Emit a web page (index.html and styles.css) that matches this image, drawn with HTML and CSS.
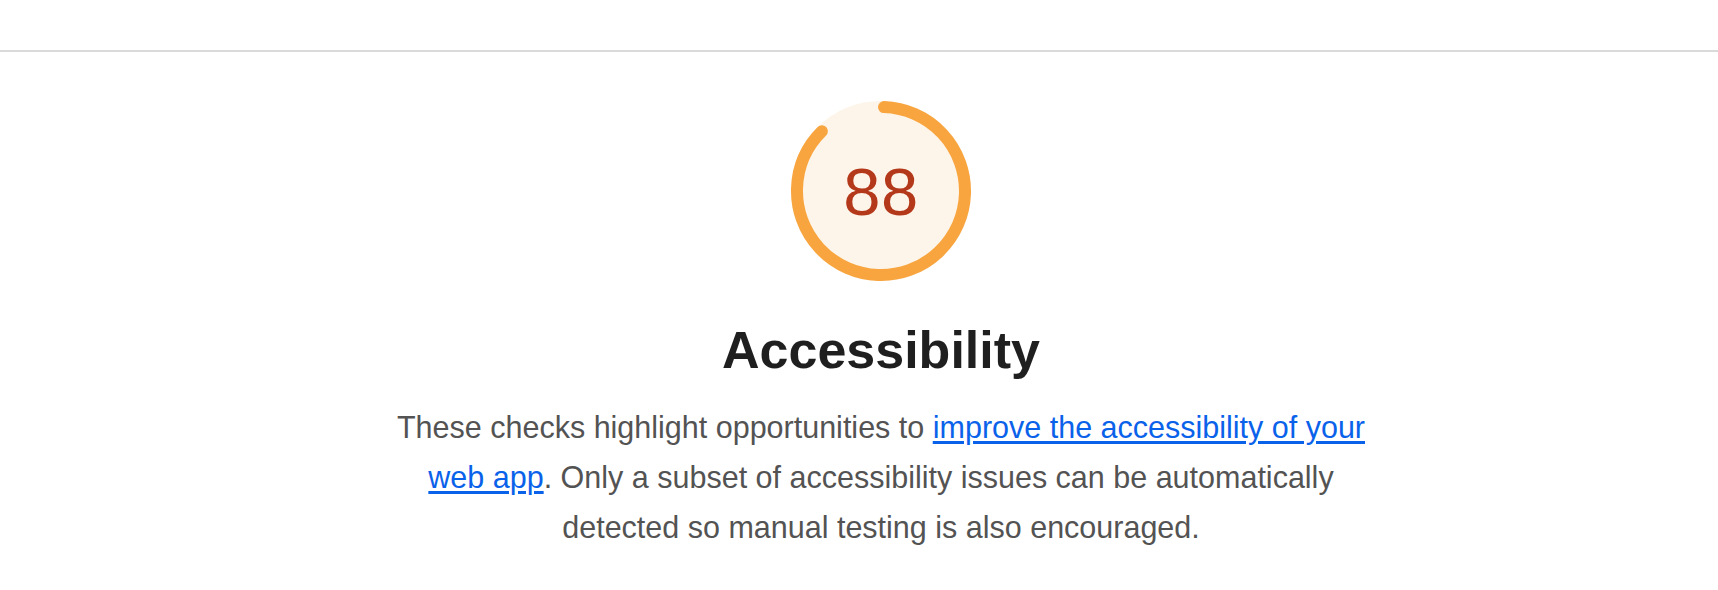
FILE: index.html
```html
<!DOCTYPE html>
<html lang="en">
<head>
<meta charset="utf-8">
<title>Accessibility</title>
<link rel="stylesheet" href="styles.css">
</head>
<body>
<div class="topbar"></div>
<section class="category-header">
  <div class="gauge">
    <svg class="gauge-svg" viewBox="0 0 120 120" width="180" height="180" aria-hidden="true">
      <circle class="gauge-base" cx="60" cy="60" r="56" stroke-width="8"></circle>
      <circle class="gauge-arc" cx="60" cy="60" r="56" stroke-width="8" stroke-dasharray="305.64 351.86" transform="rotate(-87.95 60 60)"></circle>
    </svg>
    <div class="gauge-percentage">88</div>
  </div>
  <h1 class="category-title">Accessibility</h1>
  <p class="category-description">These checks highlight opportunities to <a href="#">improve the accessibility of your web app</a>. Only a subset of accessibility issues can be automatically detected so manual testing is also encouraged.</p>
</section>
</body>
</html>
```

FILE: styles.css
```css
html, body {
  margin: 0;
  padding: 0;
  background: #ffffff;
}

body {
  font-family: "Liberation Sans", Arial, Helvetica, sans-serif;
}

.topbar {
  height: 50px;
  border-bottom: 2px solid #dadada;
}

.category-header {
  display: flex;
  flex-direction: column;
  align-items: center;
  padding: 49px 0 0 44px;
}

.gauge {
  display: grid;
  width: 180px;
  height: 180px;
  place-items: center;
}

.gauge > * {
  grid-area: 1 / 1;
}

.gauge-svg {
  display: block;
}

.gauge-base {
  fill: #f8a540;
  stroke: #f8a540;
  opacity: 0.1;
}

.gauge-arc {
  fill: none;
  stroke: #f8a540;
  stroke-linecap: round;
}

.gauge-percentage {
  font-size: 67px;
  line-height: 1;
  color: #b4381a;
  letter-spacing: 0.5px;
}

.category-title {
  margin: 39px 0 0;
  font-size: 52px;
  line-height: 60px;
  font-weight: 700;
  color: #1f1f1f;
}

.category-description {
  margin: 22px 0 0;
  max-width: 1010px;
  text-align: center;
  font-size: 30.5px;
  line-height: 50px;
  color: #535353;
}

.category-description a {
  color: #0b62ea;
  text-decoration: underline;
  text-underline-offset: 3px;
}
```
